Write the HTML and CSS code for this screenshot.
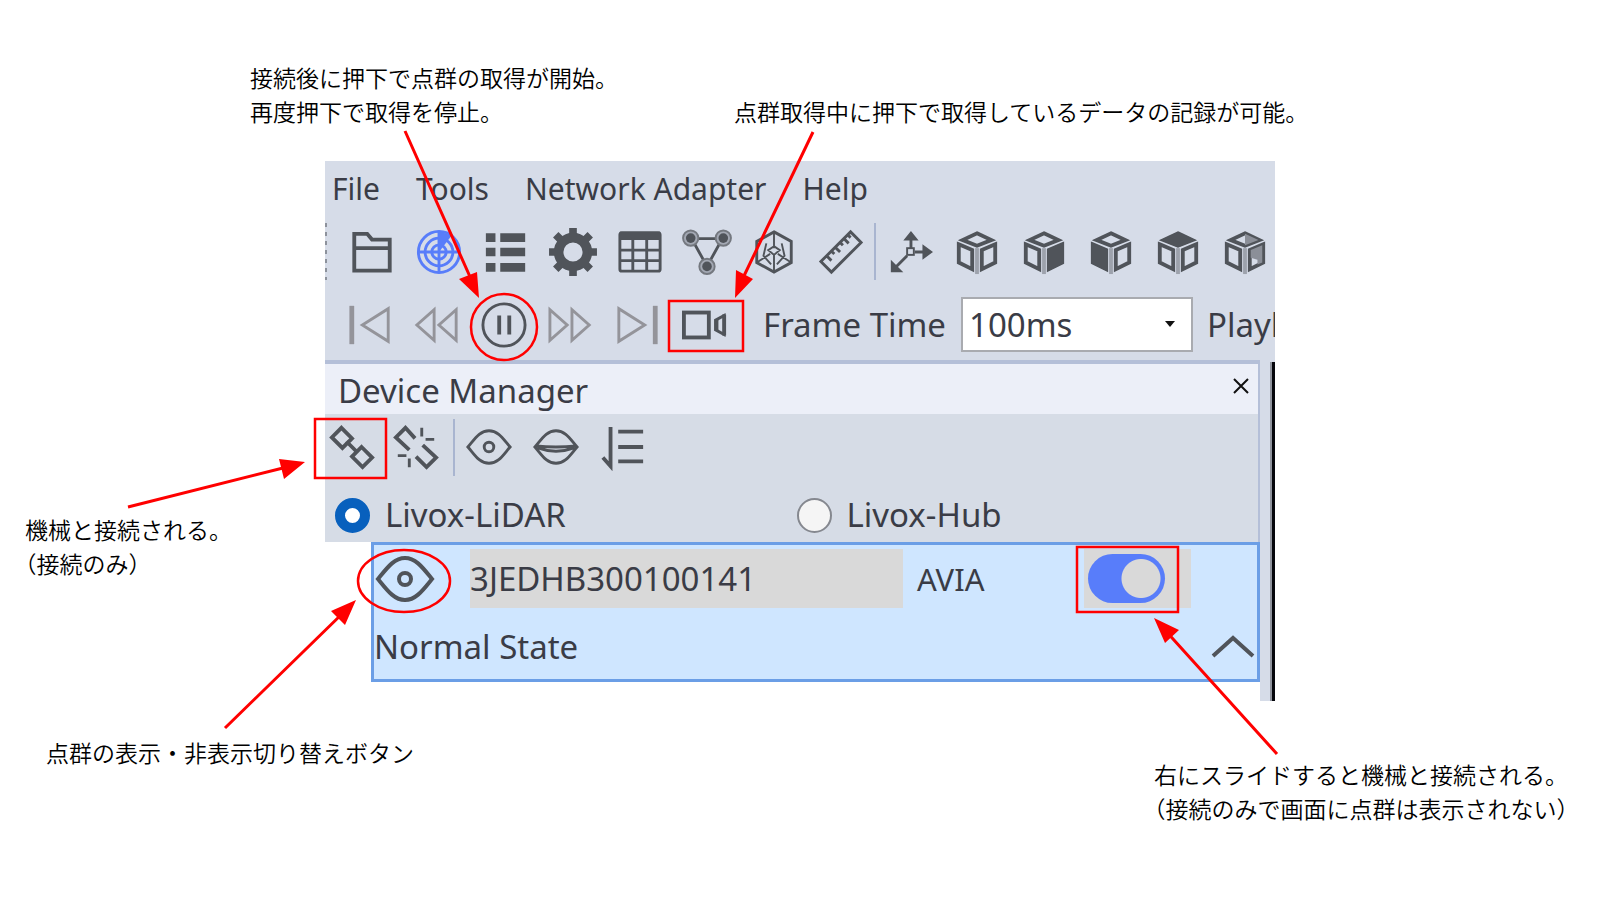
FILE: index.html
```html
<!DOCTYPE html>
<html lang="ja">
<head>
<meta charset="utf-8">
<title>Livox Viewer</title>
<link rel="stylesheet" href="styles.css">
</head>
<body>
<svg class="defs" width="0" height="0" aria-hidden="true">
  <symbol id="cube" viewBox="0 0 48 48">
    <path d="M24 4.500 39 11.500 24 17.500 9 11.500Z" stroke-width="4"/>
    <path d="M5 16 19 22V42L5 35Z" stroke-width="4"/>
    <path d="M43 16 29 22V42l14-7Z" stroke-width="4"/>
    <path d="M24 20v27" class="thin"/>
  </symbol>
</svg>
<main class="figure">
  <section class="app">
    <nav class="menu">
      <button>File</button><button>Tools</button><button>Network Adapter</button><button>Help</button>
    </nav>
    <div class="toolbar views">
      <span class="grip"></span>
      <button aria-label="Open"><svg viewBox="0 0 48 48"><path d="M5.500 43.500V5H19l5 6h18.500v32.500ZM5 20h38" stroke-width="4"/></svg></button>
      <button aria-label="Radar" class="blue"><svg viewBox="0 0 48 48"><circle cx="24" cy="24" r="21.500"/><circle cx="24" cy="24" r="14.500"/><circle cx="24" cy="24" r="7.500"/><path d="M24 3v42M3 24h42"/><path class="fill" d="M24 2 37 7 24 24Z"/></svg></button>
      <button aria-label="List"><svg viewBox="0 0 48 48"><path d="M3 9h10M3 24h10M3 40h10M18 9h26M18 24h26M18 40h26" stroke-width="9"/></svg></button>
      <button aria-label="Settings"><svg viewBox="0 0 48 48"><circle cx="24" cy="24" r="15" stroke-width="10"/><path d="M24-1v9M24 40v9M-1 24h9M40 24h9M6 6l6 6M42 6l-6 6M6 42l6-6M42 42l-6-6" stroke-width="8"/></svg></button>
      <button aria-label="Table"><svg viewBox="0 0 48 48"><rect x="3" y="4" width="42" height="40" rx="2"/><path d="M3 7h42" stroke-width="9"/><path d="M3 22h42M3 33h42M16.500 10v34M31 10v34" stroke-width="3"/></svg></button>
      <button aria-label="Topology"><svg viewBox="0 0 48 48"><path d="M8 10h32L24 39Z"/><g class="halo"><circle cx="7" cy="9.500" r="8"/><circle cx="41" cy="9.500" r="8"/><circle cx="24" cy="39" r="8"/></g><g class="fill"><circle cx="7" cy="9.500" r="5"/><circle cx="41" cy="9.500" r="5"/><circle cx="24" cy="39" r="5"/></g></svg></button>
      <button aria-label="Point cloud"><svg viewBox="0 0 48 48"><path d="M24 3 42 13v22L24 45 6 35V13Z"/><path d="M24 3v17M24 27v18M6 35l14-9M42 35l-14-9M24 18l-6 4 6 5 6-5ZM16 15l-3 13 8 9M32 15l3 13-8 9" stroke-width="2"/></svg></button>
      <button aria-label="Measure"><svg viewBox="0 0 48 48"><path d="M3 34 34 3l11 11L14 45ZM9 28l5 5M14 23l3 3M18 19l5 5M23 14l3 3M27 10l5 5M31 6l3 3" stroke-width="3"/></svg></button>
      <span class="rule"></span>
      <button aria-label="Axes"><svg viewBox="0 0 48 48"><path d="M25 20V6M29 24h14M21 28 8 41"/><rect x="21" y="20" width="7" height="7" stroke-width="2"/><path class="fill" d="M4 32v13h13ZM17 12l8-10 8 10ZM37 16l11 8-11 8Z"/></svg></button>
      <button aria-label="View"><svg><use href="#cube"/></svg></button>
      <button aria-label="Right view"><svg viewBox="0 0 48 48"><use href="#cube"/><path class="fill" d="M44 14 28 21v23l16-8Z"/></svg></button>
      <button aria-label="Left view"><svg viewBox="0 0 48 48"><use href="#cube"/><path class="fill" d="M4 14 20 21v23L4 36Z"/></svg></button>
      <button aria-label="Top view"><svg viewBox="0 0 48 48"><use href="#cube"/><path class="fill" d="M24 3 42 11.500 24 19 6 11.500Z"/></svg></button>
      <button aria-label="Back view"><svg viewBox="0 0 48 48"><use href="#cube"/><path class="shade" d="M24 5 38 11.500 24 17ZM42 17l-12 5v8l7 2v5l5-2Z"/></svg></button>
    </div>
    <div class="toolbar play">
      <button aria-label="First" class="off"><svg viewBox="0 0 48 48"><path d="M5 4v40" stroke-width="5"/><path d="M43 7v34L16 24Z"/></svg></button>
      <button aria-label="Rewind" class="off"><svg viewBox="0 0 48 48"><path d="M21 8v32L3 24ZM44 8v32L26 24Z"/></svg></button>
      <button aria-label="Pause"><svg viewBox="0 0 48 48"><circle cx="24" cy="24" r="22"/><path d="M19 14v20M29.500 14v20" stroke-width="4"/></svg></button>
      <button aria-label="Forward" class="off"><svg viewBox="0 0 48 48"><path d="M2 8v32l18-16ZM25 8v32l18-16Z"/></svg></button>
      <button aria-label="Last" class="off"><svg viewBox="0 0 48 48"><path d="M42 4v40" stroke-width="5"/><path d="M4 7v34l27-17Z"/></svg></button>
      <button aria-label="Record"><svg viewBox="0 0 48 48"><rect x="2" y="11" width="26" height="26" stroke-width="4"/><path d="M44 14v20l-9-5v-10Z"/><path d="M36 18v12M44 13v22" stroke-width="4"/></svg></button>
      <label for="frame">Frame Time</label>
      <span class="combo"><select id="frame"><option>100ms</option></select><svg viewBox="0 0 10 6"><path class="fill" d="M0 0h10L5 6Z"/></svg></span>
      <span class="more">Playback</span>
    </div>
    <div class="body">
      <section class="dock">
        <header class="title"><h1>Device Manager</h1><button aria-label="Close"><svg viewBox="0 0 18 18"><path d="m2 2 14 14M16 2 2 16"/></svg></button></header>
        <div class="panel">
          <div class="toolbar devices">
            <button aria-label="Connect"><svg viewBox="0 0 48 48"><path d="m13 4 11 11-10 10L3 14ZM34 24l11 11-10 10L24 34ZM18 18l12 12" stroke-width="4"/></svg></button>
            <button aria-label="Disconnect"><svg viewBox="0 0 48 48"><path d="m23 15-10-11L3 14l14 13M31 22l14 13-10 10-11-11" stroke-width="4"/><path d="M30 4v9M34 16h9M5 33h9M17 36v9"/></svg></button>
            <span class="rule"></span>
            <button aria-label="Show"><svg viewBox="0 0 48 48"><path d="M2 24C9 16 14 7 24 7s15 9 22 17C39 32 34 41 24 41S9 32 2 24Z"/><circle cx="24" cy="24" r="5"/></svg></button>
            <button aria-label="Hide"><svg viewBox="0 0 48 48"><path d="M2 24C9 16 14 7 24 7s15 9 22 17C39 32 34 41 24 41S9 32 2 24ZM3 23q21 2 42 0M5 25q19 7 38 0"/></svg></button>
            <button aria-label="Sort"><svg viewBox="0 0 48 48"><path d="M11 3v41l-8-9M19 8h26M19 24h26M19 39h26" stroke-width="4"/></svg></button>
          </div>
          <div class="radios">
            <label><input type="radio" name="kind" checked>Livox-LiDAR</label>
            <label><input type="radio" name="kind">Livox-Hub</label>
          </div>
        </div>
        <article class="device">
          <div class="line">
            <button aria-label="Toggle points" class="eye"><svg viewBox="0 0 60 48"><path d="M3 24C12 13 19 3 30 3s18 10 27 21C48 35 41 45 30 45S12 35 3 24Z" stroke-width="4"/><circle cx="30" cy="24" r="6" stroke-width="4"/></svg></button>
            <input class="serial" type="text" aria-label="Serial" value="3JEDHB300100141">
            <span class="model">AVIA</span>
            <span class="switchbox"><input class="switch" type="checkbox" aria-label="Connect device" checked></span>
          </div>
          <div class="line state">
            <span>Normal State</span>
            <button aria-label="Collapse"><svg viewBox="0 0 44 24"><path d="M2 21 22 3l20 18" stroke-width="4"/></svg></button>
          </div>
        </article>
      </section>
      <div class="edge"></div>
    </div>
  </section>
  <svg class="marks" viewBox="0 0 1600 900" aria-hidden="true">
    <circle cx="504" cy="327" r="33"/>
    <rect x="669" y="301" width="74" height="50"/>
    <rect x="315" y="419" width="71" height="59"/>
    <ellipse cx="404" cy="581" rx="46" ry="31"/>
    <rect x="1077" y="547" width="101" height="65"/>
    <path class="shaft" d="m405 131 66 148M813 132l-71 148M128 507l155-39M225 728 345 611M1277 754 1164 629"/>
    <path class="head" d="m479 298-20-19 18-7ZM735 298l1-28 17 9ZM305 462l-26-3 5 20ZM356 600l-11 25-14-14ZM1154 618l25 12-14 13Z"/>
  </svg>
  <p class="note n-start">接続後に押下で点群の取得が開始。<br>再度押下で取得を停止。</p>
  <p class="note n-record">点群取得中に押下で取得しているデータの記録が可能。</p>
  <p class="note n-link">機械と接続される。<br>（接続のみ）</p>
  <p class="note n-show">点群の表示・非表示切り替えボタン</p>
  <p class="note n-slide">右にスライドすると機械と接続される。<br>（接続のみで画面に点群は表示されない）</p>
</main>
</body>
</html>
```
FILE: styles.css
```css
* { box-sizing: border-box; }
body { margin: 0; background: #fff; color: #000; }
button, input, select { font: inherit; color: inherit; }
button { border: 0; padding: 0; background: none; }
svg { fill: none; stroke: #50545a; stroke-width: 3; }
.fill { fill: #50545a; stroke: none; }
.defs { position: absolute; }
.thin { stroke: #9da2ac; stroke-width: 4; }
.halo { fill: #a3a8b3; stroke: #74787f; stroke-width: 2; }
.shade { fill: #8b8f98; stroke: none; }

.figure { position: relative; min-height: 100vh; padding: 161px 325px 0; overflow: hidden; }
.app { overflow: hidden; font: 33px/40px "Noto Sans", "Open Sans", sans-serif; color: #3a3c46; }
.menu, .toolbar { display: flex; align-items: center; background: #d6dce8; white-space: nowrap; }
.menu { height: 55px; padding-left: 7px; gap: 36px; font-size: 30px; }

.toolbar button { flex: none; width: 67px; height: 48px; display: flex; justify-content: center; align-items: center; }
.toolbar svg { width: 46px; height: 46px; overflow: visible; }
.rule { flex: none; width: 2px; height: 57px; background: #a9b5d0; }
.views { height: 71px; }
.grip { flex: none; width: 2px; height: 57px; margin-right: 11px; background: repeating-linear-gradient(#8d929c 0 4px, transparent 4px 9px); }
.blue svg { stroke: #587dfa; }
.blue .fill { fill: #587dfa; }
.off svg { stroke: #94949a; }
.play { height: 73px; padding: 2px 0 0 11px; }
.play label { flex: none; margin-left: 25px; width: 198px; }
.combo { flex: none; position: relative; width: 232px; height: 55px; }
.combo select { width: 100%; height: 100%; padding: 0 6px; appearance: none; border: 2px solid #a9abb0; border-radius: 0; background: #fff; }
.combo svg { position: absolute; right: 18px; top: 24px; width: 10px; height: 6px; }
.combo .fill { fill: #111; }
.more { margin-left: 14px; }

.body { display: flex; height: 341px; background: linear-gradient(#d6dce8 4px, #fff 4px); }
.dock { flex: 1; min-width: 0; border-top: 4px solid #b4bfd8; }
.title { display: flex; justify-content: space-between; align-items: center; height: 50px; padding: 4px 8px 0 13px; background: #eceff8; border-right: 2px solid #b4bfd8; }
.title h1 { margin: 0; font-size: 33px; font-weight: 400; }
.title button { display: flex; margin-bottom: 10px; }
.title svg { width: 18px; height: 18px; stroke: #111; stroke-width: 2; }
.panel { height: 128px; background: #d6dce6; border-right: 2px solid #b4bfd8; }
.devices { height: 66px; background: none; }
.devices button:first-child { width: 53px; }
.devices button:nth-child(2) { width: 75px; }
.radios { display: grid; grid-template-columns: 50% 50%; padding: 15px 0 0 10px; }
.radios label { display: flex; align-items: center; gap: 15px; }
.radios input { appearance: none; width: 35px; height: 35px; margin: 0; border: 2px solid #85888f; border-radius: 50%; background: #f5f5f5; }
.radios input:checked { border: 10px solid #0860bd; background: #fff; }

.device { margin-left: 46px; height: 140px; border: 3px solid #6b9ee6; background: #cfe6ff; }
.line { display: flex; align-items: center; height: 67px; }
.eye { width: 60px; height: 48px; margin: 0 35px 0 1px; }
.eye svg { width: 60px; height: 48px; }
.serial { flex: 1; min-width: 0; height: 59px; padding: 0; border: 0; background: #d9d9d9; }
.model { width: 181px; padding-left: 14px; font-size: 31px; }
.switchbox { display: flex; align-items: center; width: 107px; height: 59px; margin-right: 66px; padding-left: 4px; background: #d9d9d9; }
.switch { appearance: none; width: 77px; height: 49px; margin: 0; border-radius: 25px; background: radial-gradient(circle at 53px 50%, #d9d9d9 19px, #587dfa 20px); }
.state { justify-content: space-between; padding: 2px 2px 0 0; }
.state button { display: flex; }
.state svg { width: 44px; height: 24px; }
.edge { width: 15px; margin-top: 2px; background: #d6dce8; border-right: 3px solid #05060c; box-shadow: inset -2px 0 #8f939d; }

.marks { position: absolute; left: 0; top: 0; width: 100%; stroke: #f00; stroke-width: 2.5; }
.shaft { stroke-width: 3; }
.head { fill: #f00; stroke: none; }
.note { position: absolute; margin: 0; font: 350 23px/34px "Noto Sans CJK JP", sans-serif; white-space: nowrap; text-spacing-trim: trim-start; }
.n-start { left: 250px; top: 60px; }
.n-record { left: 734px; top: 94px; }
.n-link { left: 25px; top: 512px; }
.n-show { left: 46px; top: 735px; }
.n-slide { left: 1154px; top: 757px; }
```
